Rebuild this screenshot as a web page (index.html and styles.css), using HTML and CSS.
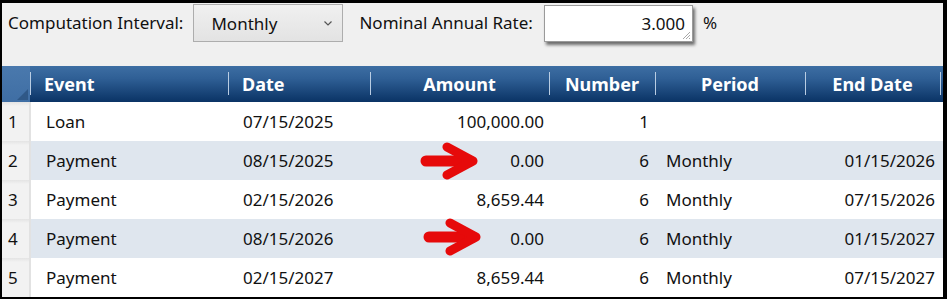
FILE: index.html
```html
<!DOCTYPE html>
<html lang="en">
<head>
    <meta charset="UTF-8">
    <title>Loan Schedule</title>
    <link rel="stylesheet" href="styles.css">
</head>
<body>

<div class="frame">
    <div class="toolbar">
        <span class="label">Computation Interval:</span>
        <div class="combo">
            <span>Monthly</span>
            <svg class="chevron" width="8" height="5" viewBox="0 0 8 5"><polyline points="0.5,0.5 4,4 7.5,0.5" fill="none" stroke="#555" stroke-width="1.2"/></svg>
        </div>
        <span class="label rate-label">Nominal Annual Rate:</span>
        <div class="rate-box">
            3.000
            <svg class="grip" width="9" height="9" viewBox="0 0 9 9"><path d="M8 1 L1 8 M8 4 L4 8 M8 7 L7 8" stroke="#a8a8a8" stroke-width="1"/></svg>
        </div>
        <span class="label pct">%</span>
    </div>

    <table class="grid">
        <colgroup>
            <col style="width:28px">
            <col style="width:198px">
            <col style="width:142px">
            <col style="width:179px">
            <col style="width:106px">
            <col style="width:150px">
            <col style="width:135px">
            <col style="width:3px">
        </colgroup>
        <thead>
            <tr>
                <th class="corner"></th>
                <th class="left">Event</th>
                <th class="left">Date</th>
                <th>Amount</th>
                <th>Number</th>
                <th>Period</th>
                <th>End Date</th>
                <th class="filler"></th>
            </tr>
        </thead>
        <tbody>
            <tr>
                <td class="rownum">1</td>
                <td class="ev">Loan</td>
                <td class="dt">07/15/2025</td>
                <td class="amt">100,000.00</td>
                <td class="num">1</td>
                <td class="per"></td>
                <td class="end"></td>
                <td></td>
            </tr>
            <tr>
                <td class="rownum">2</td>
                <td class="ev">Payment</td>
                <td class="dt">08/15/2025</td>
                <td class="amt">0.00</td>
                <td class="num">6</td>
                <td class="per">Monthly</td>
                <td class="end">01/15/2026</td>
                <td></td>
            </tr>
            <tr>
                <td class="rownum">3</td>
                <td class="ev">Payment</td>
                <td class="dt">02/15/2026</td>
                <td class="amt">8,659.44</td>
                <td class="num">6</td>
                <td class="per">Monthly</td>
                <td class="end">07/15/2026</td>
                <td></td>
            </tr>
            <tr>
                <td class="rownum">4</td>
                <td class="ev">Payment</td>
                <td class="dt">08/15/2026</td>
                <td class="amt">0.00</td>
                <td class="num">6</td>
                <td class="per">Monthly</td>
                <td class="end">01/15/2027</td>
                <td></td>
            </tr>
            <tr>
                <td class="rownum">5</td>
                <td class="ev">Payment</td>
                <td class="dt">02/15/2027</td>
                <td class="amt">8,659.44</td>
                <td class="num">6</td>
                <td class="per">Monthly</td>
                <td class="end">07/15/2027</td>
                <td></td>
            </tr>
        </tbody>
    </table>

    <!-- red call-out arrows pointing at the zero payments -->
    <svg class="arrow arrow-1" width="60" height="38" viewBox="0 0 60 38">
        <line x1="6" y1="19" x2="50" y2="19" stroke="#e60a0a" stroke-width="11" stroke-linecap="round"/>
        <polyline points="27,5 53,19 27,33" fill="none" stroke="#e60a0a" stroke-width="9" stroke-linecap="round" stroke-linejoin="round"/>
    </svg>
    <svg class="arrow arrow-2" width="60" height="38" viewBox="0 0 60 38">
        <line x1="6" y1="19" x2="50" y2="19" stroke="#e60a0a" stroke-width="11" stroke-linecap="round"/>
        <polyline points="27,5 53,19 27,33" fill="none" stroke="#e60a0a" stroke-width="9" stroke-linecap="round" stroke-linejoin="round"/>
    </svg>
</div>

</body>
</html>
```

FILE: styles.css
```css
* {
    box-sizing: border-box;
    margin: 0;
    padding: 0;
}

body {
    background: #000;
    font-family: "Noto Sans", "Open Sans", sans-serif;
    font-size: 17px;
    color: #111;
}

.frame {
    position: relative;
    width: 947px;
    height: 299px;
    border-style: solid;
    border-color: #000;
    border-width: 3px 4px 2px 2px;
    background: #f0f0f0;
    overflow: hidden;
}

.toolbar {
    display: flex;
    align-items: flex-start;
    height: 63px;
    padding: 1px 0 0 6px;
}

.label {
    line-height: 38px;
    white-space: nowrap;
}

.combo {
    display: flex;
    align-items: center;
    justify-content: space-between;
    width: 150px;
    height: 38px;
    margin-left: 10px;
    padding: 0 10px 0 17px;
    border: 1px solid #adadad;
    background: linear-gradient(#f0f0f0, #e3e3e3);
}

.rate-label {
    margin-left: 16px;
}

.rate-box {
    position: relative;
    width: 149px;
    height: 37px;
    margin: 1px 0 0 11px;
    padding-right: 7px;
    border: 1px solid #9a9a9a;
    background: #fff;
    text-align: right;
    line-height: 35px;
    box-shadow: 2px 3px 3px rgba(0, 0, 0, 0.55);
}

.grip {
    position: absolute;
    right: 1px;
    bottom: 1px;
}

.pct {
    margin-left: 10px;
}

.grid {
    width: 941px;
    border-collapse: collapse;
    table-layout: fixed;
}

.grid th {
    position: relative;
    height: 36px;
    padding: 0;
    background: linear-gradient(#3d6ea3, #2f5f95 35%, #0a3365);
    color: #fff;
    font-weight: bold;
    font-size: 18px;
    text-align: center;
    white-space: nowrap;
}

.grid th.left {
    text-align: left;
    padding-left: 14px;
}

.grid th + th::before {
    content: "";
    position: absolute;
    left: 0;
    top: 6px;
    bottom: 7px;
    width: 1px;
    background: #b9cde3;
}

.grid th.corner {
    background: linear-gradient(#4a79ad, #3f6ea4);
}

.grid th.corner::after {
    content: "";
    position: absolute;
    right: 2px;
    bottom: 2px;
    border-style: solid;
    border-width: 0 0 11px 11px;
    border-color: transparent transparent #2f5887 transparent;
}

.grid td {
    height: 39px;
    padding: 0;
    white-space: nowrap;
    background: #fff;
}

.grid tbody tr:nth-child(even) td {
    background: #dfe6ee;
}

.grid td.rownum,
.grid tbody tr:nth-child(even) td.rownum {
    padding-left: 6px;
    background: linear-gradient(#e4e4e4, #f2f2f2 4px, #f2f2f2);
    border-right: 2px solid #e2e2e2;
}

.ev, .dt {
    padding-left: 15px !important;
}

.amt {
    text-align: right;
    padding-right: 5px !important;
}

.num {
    text-align: right;
    padding-right: 6px !important;
}

.per {
    padding-left: 11px !important;
}

.end {
    text-align: right;
    padding-right: 5px !important;
}

.arrow {
    position: absolute;
}

.arrow-1 {
    left: 418px;
    top: 139px;
}

.arrow-2 {
    left: 421px;
    top: 215px;
}
```
